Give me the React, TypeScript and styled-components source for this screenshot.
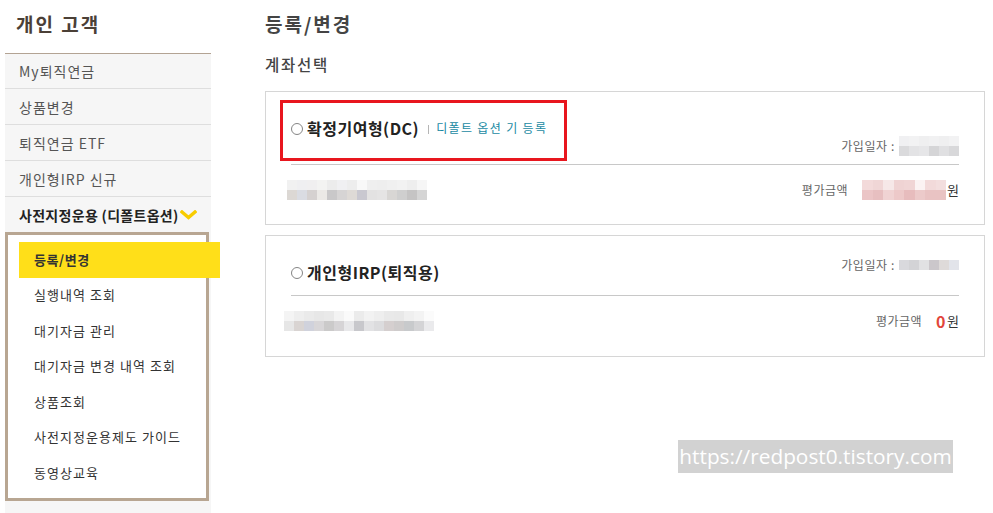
import React from "react";
import styled, { createGlobalStyle } from "styled-components";

const GlobalStyle = createGlobalStyle`
  html, body { margin: 0; padding: 0; background: #fff; }
  body { font-family: "Noto Sans CJK KR", "Noto Sans", sans-serif; color: #333; }
  * { box-sizing: border-box; }
`;

const Page = styled.div`
  position: relative;
  display: flex;
  align-items: stretch;
  width: 993px;
  min-height: 513px;
  overflow: hidden;
`;

/* ---------- Sidebar ---------- */
const Sidebar = styled.aside`
  width: 206px;
  margin-left: 5px;
  display: flex;
  flex-direction: column;
`;

const SideTitle = styled.h2`
  margin: 0;
  height: 53px;
  padding: 13px 0 0 11px;
  font-size: 19px;
  line-height: 22px;
  font-weight: 700;
  letter-spacing: 2px;
  color: #4b4037;
`;

const Nav = styled.nav`
  flex: 1;
  background: #f6f6f6;
  border-top: 1px solid #b3a393;
`;

const MenuItem = styled.div<{ $active?: boolean }>`
  display: flex;
  align-items: center;
  height: ${(p) => (p.$active ? "35px" : "36px")};
  padding-left: 14px;
  border-bottom: ${(p) => (p.$active ? "none" : "1px solid #dedede")};
  font-size: 14px;
  line-height: 18px;
  letter-spacing: ${(p) => (p.$active ? "0.3px" : "1px")};
  font-weight: ${(p) => (p.$active ? 700 : 400)};
  color: ${(p) => (p.$active ? "#222" : "#555")};
  &:first-child { height: 35px; }
`;

const Chevron = styled.svg`
  width: 17px;
  height: 10px;
  margin-left: 1px;
  margin-top: 1px;
`;

const SubBox = styled.div`
  margin-right: 2px;
  border: 3px solid #b8a692;
  background: #fff;
  padding: 7px 0 7.5px;
`;

const SubItem = styled.div<{ $active?: boolean }>`
  display: flex;
  align-items: center;
  height: 35.5px;
  margin-left: 11px;
  margin-right: -14px;
  padding-left: 15px;
  font-size: 13px;
  line-height: 18px;
  letter-spacing: ${(p) => (p.$active ? "0.6px" : "1.05px")};
  font-weight: ${(p) => (p.$active ? 700 : 400)};
  color: #333;
  background: ${(p) => (p.$active ? "#ffdf19" : "transparent")};
`;

/* ---------- Main ---------- */
const Main = styled.main`
  margin-left: 54px;
  width: 720px;
  padding-top: 12px;
`;

const MainTitle = styled.h1`
  margin: 0;
  font-size: 19px;
  line-height: 24px;
  font-weight: 700;
  letter-spacing: 2px;
  color: #444;
`;

const SectionTitle = styled.h3`
  margin: 17px 0 16px;
  font-size: 15.5px;
  line-height: 22px;
  font-weight: 500;
  letter-spacing: 1.7px;
  color: #444;
`;

const Card = styled.section`
  position: relative;
  border: 1px solid #d6d6d6;
  padding: 0 25px;
  & + & { margin-top: 10px; }
`;

const Highlight = styled.div`
  position: absolute;
  left: 14px;
  top: 8px;
  width: 287px;
  height: 61px;
  border: 3px solid #e8161e;
  pointer-events: none;
`;

const TopRow = styled.div<{ $h: number }>`
  display: flex;
  justify-content: space-between;
  align-items: flex-start;
  height: ${(p) => p.$h}px;
  border-bottom: 1px solid #c8c8c8;
`;

const CardTitle = styled.div`
  display: flex;
  align-items: center;
  margin-top: 25px;
  font-size: 16px;
  line-height: 22px;
  font-weight: 700;
  letter-spacing: 0.5px;
  color: #222;
`;

const Radio = styled.span`
  display: inline-block;
  width: 12px;
  height: 12px;
  border: 1px solid #858585;
  border-radius: 50%;
  margin: 1px 4px 0 0;
`;

const Bar = styled.span`
  display: inline-block;
  width: 1px;
  height: 9px;
  background: #b5b5b5;
  margin: 2px 7px 0 9px;
`;

const OptionLink = styled.a`
  font-size: 12px;
  font-weight: 400;
  letter-spacing: 1.35px;
  color: #1a8aa3;
  text-decoration: none;
`;

const DateInfo = styled.div<{ $top: number }>`
  display: flex;
  align-items: center;
  gap: 4px;
  margin-top: ${(p) => p.$top}px;
  font-size: 12px;
  line-height: 20px;
  letter-spacing: 0.6px;
  color: #666;
`;

const ValueRow = styled.div<{ $h: number }>`
  display: flex;
  justify-content: space-between;
  align-items: center;
  height: ${(p) => p.$h}px;
  padding-bottom: ${(p) => p.$h - 50}px;
`;

const ValueInfo = styled.div`
  display: flex;
  align-items: center;
  font-size: 12px;
  line-height: 22px;
  letter-spacing: 0.5px;
  color: #666;
`;

const Label = styled.span`
  margin-right: 14px;
`;

const Won = styled.span`
  margin-left: 1px;
  font-size: 13px;
  letter-spacing: 0;
  color: #333;
`;

const Zero = styled.span`
  font-size: 16px;
  font-weight: 700;
  color: #e2463b;
`;

const MosaicGrid = styled.div<{ $offset?: number }>`
  display: flex;
  flex-direction: column;
  margin-left: ${(p) => p.$offset ?? 0}px;
`;

const MosaicRow = styled.div`
  display: flex;
`;

const Cell = styled.span<{ $w: number; $h: number }>`
  display: block;
  width: ${(p) => p.$w}px;
  height: ${(p) => p.$h}px;
`;

const Watermark = styled.div`
  position: absolute;
  left: 678px;
  top: 440px;
  width: 275px;
  height: 33px;
  background: #d2d2d2;
  color: #fff;
  font-family: "Open Sans", "Noto Sans", sans-serif;
  font-size: 20.8px;
  line-height: 33px;
  text-align: center;
  white-space: nowrap;
`;

const Mosaic: React.FC<{ rows: string[][]; w?: number; h?: number; offset?: number }> = ({
  rows,
  w = 10,
  h = 10,
  offset,
}) => (
  <MosaicGrid $offset={offset}>
    {rows.map((r, i) => (
      <MosaicRow key={i}>
        {r.map((c, j) => (
          <Cell key={j} $w={w} $h={h} style={{ background: c }} />
        ))}
      </MosaicRow>
    ))}
  </MosaicGrid>
);

const leftBlur1 = [
  ["#f1f1f1", "#efeff1", "#f0eff0", "#f3f3f2", "#ececec", "#f0f0f2", "#ededed", "#f8f8f8", "#efefef", "#eeeeee", "#f0f0f0", "#f2f2f2", "#eeeeee", "#f6f6f6"],
  ["#dcd8d4", "#dadce2", "#d5d1d0", "#ebe9e6", "#c9c8c9", "#d6d4d4", "#dedad6", "#c9c8d0", "#e3e2e2", "#e5e4e4", "#d8d6d4", "#cfcfcf", "#c5c4c4", "#d5d5d5"],
];
const leftBlur2 = [
  ["#f4f4f4", "#eeeeee", "#eaeaea", "#e7e7e7", "#e9e9e9", "#f3f3f3", "#fafafa", "#ebebeb", "#f2f2f2", "#eeeeee", "#e9e9e9", "#e8e8e8", "#efefef", "#f3f3f3", "#fbfbfb"],
  ["#e6e6e6", "#d9d4d2", "#d0d2dc", "#d8d6d8", "#cbcaca", "#d6d4d6", "#e8e8ea", "#c8c8cc", "#e2e2e4", "#dcdcde", "#d5cfcf", "#cfcccc", "#c8cacc", "#d4d4d6", "#eaeaec"],
];
const dateBlur1 = [
  ["#f0f0f2", "#f2f2f3", "#efeff0", "#f1f1f2", "#efeff0", "#f2f2f3"],
  ["#dadadc", "#e3e3e5", "#e6e6e8", "#d5d5d7", "#e0e0e2", "#d8d8da"],
];
const dateBlur2 = [["#d9d9dd", "#d3d3d6", "#e1e1e3", "#cbc7cb", "#dedad9", "#e2e4ea"]];
const pinkBlur = [
  ["#f3dada", "#f0d6d6", "#f6e8e8", "#efd3d3", "#f0d5d5", "#fbf3f3", "#f2dada", "#f3dede"],
  ["#ebc5c6", "#e7bfc0", "#f0d3d3", "#edc9c9", "#e7bcbd", "#eccaca", "#e9c3c3", "#e9c3c3"],
];

const menu = ["My퇴직연금", "상품변경", "퇴직연금 ETF", "개인형IRP 신규"];
const subMenu = [
  "등록/변경",
  "실행내역 조회",
  "대기자금 관리",
  "대기자금 변경 내역 조회",
  "상품조회",
  "사전지정운용제도 가이드",
  "동영상교육",
];

export default function App() {
  return (
    <>
      <GlobalStyle />
      <Page>
        <Sidebar>
          <SideTitle>개인 고객</SideTitle>
          <Nav>
            {menu.map((m) => (
              <MenuItem key={m}>{m}</MenuItem>
            ))}
            <MenuItem $active>
              사전지정운용 (디폴트옵션)
              <Chevron viewBox="0 0 17 10">
                <polyline
                  points="2,2 8.5,7.5 15,2"
                  fill="none"
                  stroke="#f8cc00"
                  strokeWidth="3.4"
                  strokeLinecap="square"
                />
              </Chevron>
            </MenuItem>
            <SubBox>
              {subMenu.map((s, i) => (
                <SubItem key={s} $active={i === 0}>
                  {s}
                </SubItem>
              ))}
            </SubBox>
          </Nav>
        </Sidebar>

        <Main>
          <MainTitle>등록/변경</MainTitle>
          <SectionTitle>계좌선택</SectionTitle>

          <Card>
            <Highlight />
            <TopRow $h={73}>
              <CardTitle>
                <Radio />
                확정기여형(DC)
                <Bar />
                <OptionLink>디폴트 옵션 기 등록</OptionLink>
              </CardTitle>
              <DateInfo $top={44}>
                가입일자 :
                <Mosaic rows={dateBlur1} />
              </DateInfo>
            </TopRow>
            <ValueRow $h={59}>
              <Mosaic rows={leftBlur1} offset={-4} />
              <ValueInfo>
                <Label>평가금액</Label>
                <Mosaic rows={pinkBlur} w={10.5} />
                <Won>원</Won>
              </ValueInfo>
            </ValueRow>
          </Card>

          <Card>
            <TopRow $h={60}>
              <CardTitle>
                <Radio />
                개인형IRP(퇴직용)
              </CardTitle>
              <DateInfo $top={19}>
                가입일자 :
                <Mosaic rows={dateBlur2} />
              </DateInfo>
            </TopRow>
            <ValueRow $h={60}>
              <Mosaic rows={leftBlur2} offset={-7} />
              <ValueInfo>
                <Label>평가금액</Label>
                <Zero>0</Zero>
                <Won>원</Won>
              </ValueInfo>
            </ValueRow>
          </Card>
        </Main>

        <Watermark>https://redpost0.tistory.com</Watermark>
      </Page>
    </>
  );
}
